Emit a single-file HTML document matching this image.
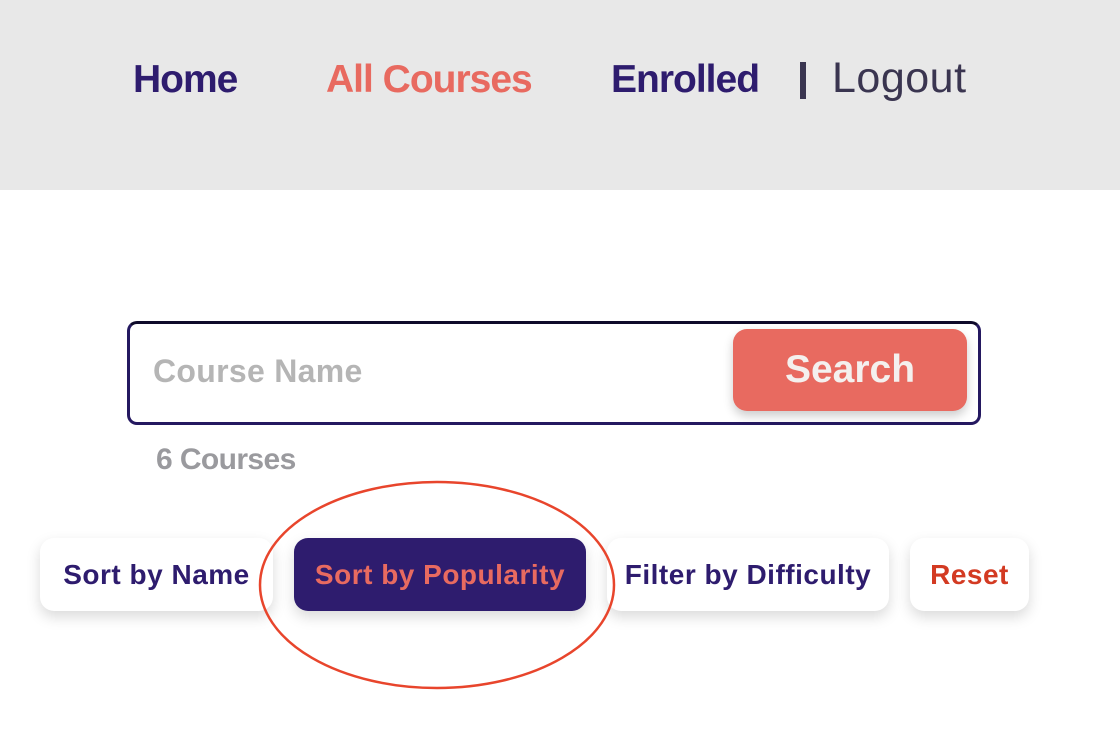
<!DOCTYPE html>
<html><head><meta charset="utf-8"><style>
body{margin:0;width:1120px;height:732px;background:#fff;position:relative;overflow:hidden;font-family:"Liberation Sans",sans-serif;}
.hdr{position:absolute;left:0;top:0;width:1120px;height:190px;background:#e8e8e8;}
.n{position:absolute;top:57px;font-size:39px;font-weight:bold;letter-spacing:-1px;line-height:46px;white-space:nowrap;}
.box{position:absolute;left:127px;top:321px;width:848px;height:98px;border:3px solid #241860;border-top-color:#0e0a2a;border-radius:10px;}
.sb{position:absolute;left:733px;top:329px;width:234px;height:82px;background:#e86a60;border-radius:14px;box-shadow:0 5px 10px rgba(0,0,0,.2);color:#f4f0ee;font-size:39px;font-weight:bold;text-align:center;line-height:82px;}
.ph{position:absolute;left:153px;top:353px;font-size:32px;font-weight:bold;color:#b5b5b5;letter-spacing:0.3px;}
.cnt{position:absolute;left:156px;top:443px;font-size:30px;font-weight:bold;color:#9a9a9e;letter-spacing:-0.6px;}
.b{position:absolute;top:538px;height:73px;border-radius:14px;background:#fff;box-shadow:0 6px 14px rgba(0,0,0,.15);font-size:28px;font-weight:bold;text-align:center;line-height:73px;color:#2e1c6e;white-space:nowrap;letter-spacing:0.5px;}
</style></head><body>
<div class="hdr"></div>
<div class="n" style="left:133px;color:#2e1c6e">Home</div>
<div class="n" style="left:326px;color:#e86a60">All Courses</div>
<div class="n" style="left:611px;color:#2e1c6e">Enrolled</div>
<div style="position:absolute;left:800px;top:62px;width:6px;height:37px;background:#3a3550"></div>
<div class="n" style="left:832px;top:55px;color:#3a3550;font-weight:normal;letter-spacing:0.5px;font-size:43px">Logout</div>
<div class="box"></div>
<div class="ph">Course Name</div>
<div class="sb">Search</div>
<div class="cnt">6 Courses</div>
<div class="b" style="left:40px;width:233px">Sort by Name</div>
<div class="b" style="left:294px;width:292px;background:#2e1c6e;color:#e86a60">Sort by Popularity</div>
<div class="b" style="left:607px;width:282px">Filter by Difficulty</div>
<div class="b" style="left:910px;width:119px;color:#d33a22">Reset</div>
<svg style="position:absolute;left:0;top:0" width="1120" height="732"><ellipse cx="437" cy="585" rx="177" ry="103" fill="none" stroke="#e8452c" stroke-width="2.5"/></svg>
</body></html>
